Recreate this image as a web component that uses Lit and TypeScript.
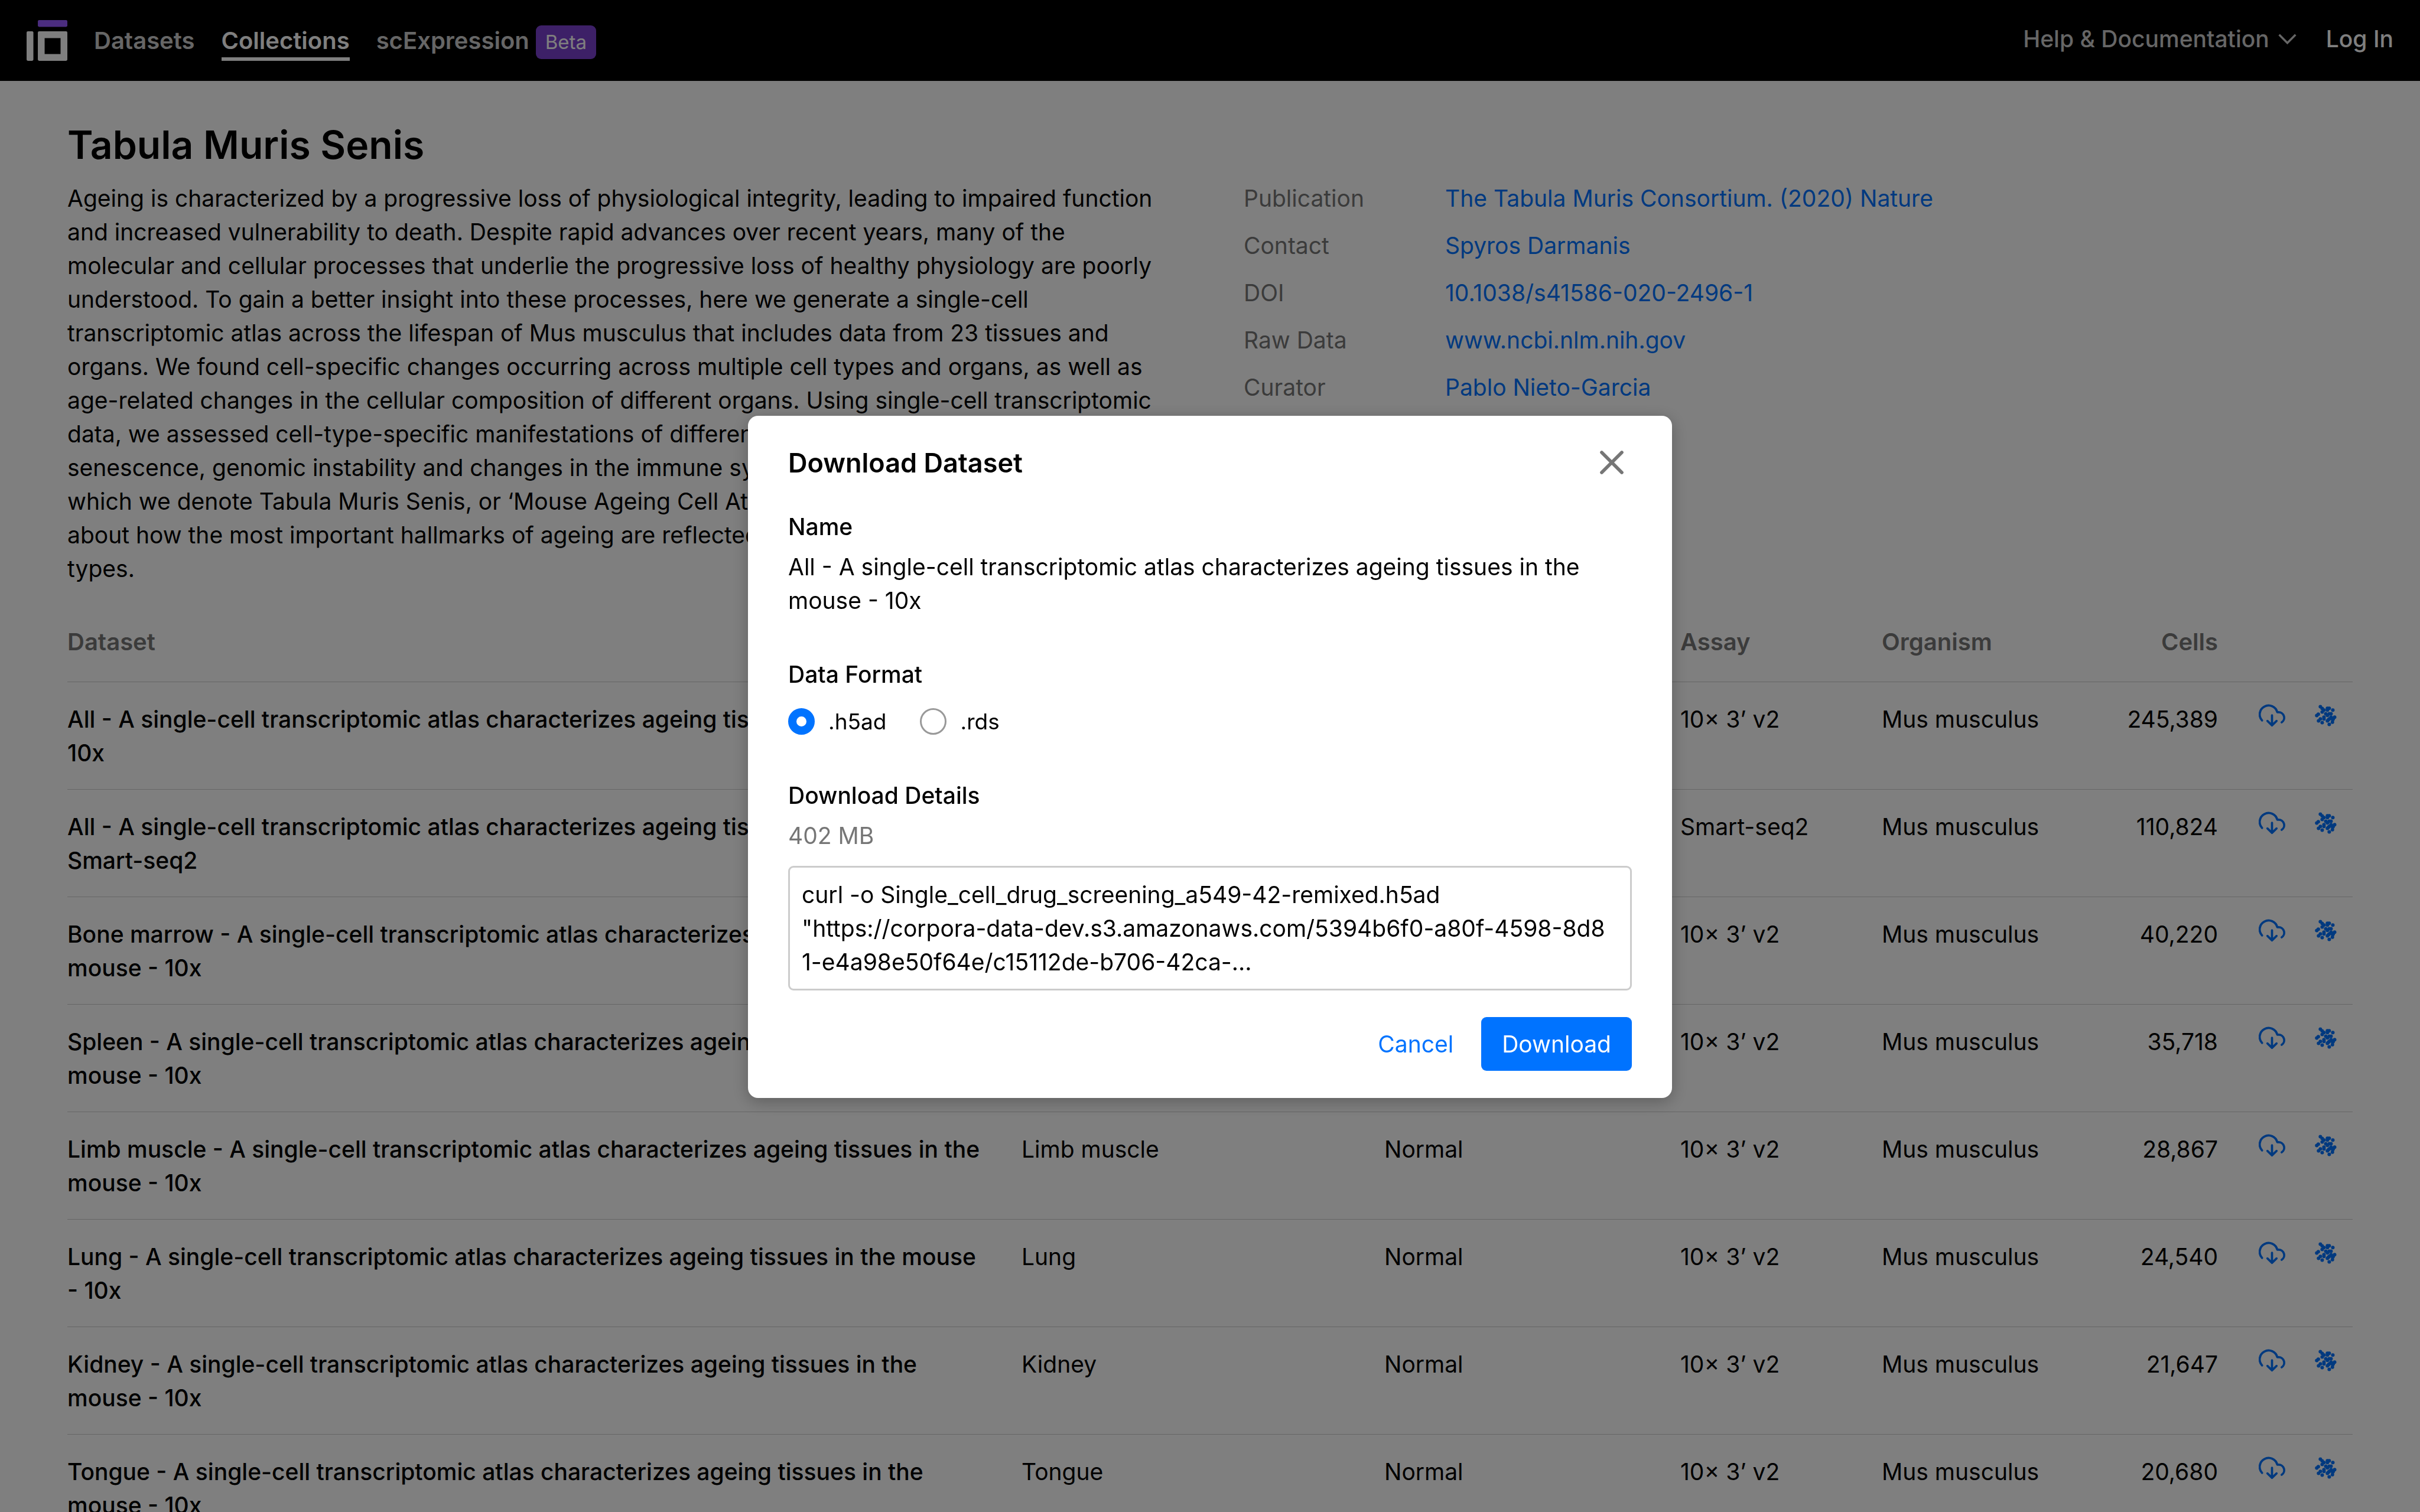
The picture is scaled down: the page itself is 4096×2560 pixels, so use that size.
import { LitElement, html, css, svg } from "lit";
import { customElement, property, state } from "lit/decorators.js";

interface Dataset {
  name: string;
  tissue: string;
  disease: string;
  assay: string;
  organism: string;
  cells: string;
}

const SUFFIX = "A single-cell transcriptomic atlas characterizes ageing tissues in the mouse";

const row = (label: string, cells: string, tech = "10x"): Dataset => ({
  name: `${label} - ${SUFFIX} - ${tech}`,
  tissue: label,
  disease: "Normal",
  assay: tech === "10x" ? "10× 3’ v2" : tech,
  organism: "Mus musculus",
  cells,
});

const DATASETS: Dataset[] = [
  row("All", "245,389"),
  row("All", "110,824", "Smart-seq2"),
  row("Bone marrow", "40,220"),
  row("Spleen", "35,718"),
  row("Limb muscle", "28,867"),
  row("Lung", "24,540"),
  row("Kidney", "21,647"),
  row("Tongue", "20,680"),
];

const DETAILS = [
  ["Publication", "The Tabula Muris Consortium. (2020) Nature"],
  ["Contact", "Spyros Darmanis"],
  ["DOI", "10.1038/s41586-020-2496-1"],
  ["Raw Data", "www.ncbi.nlm.nih.gov"],
  ["Curator", "Pablo Nieto-Garcia"],
];

const DESCRIPTION =
  "Ageing is characterized by a progressive loss of physiological integrity, leading to impaired function and increased vulnerability to death. Despite rapid advances over recent years, many of the molecular and cellular processes that underlie the progressive loss of healthy physiology are poorly understood. To gain a better insight into these processes, here we generate a single-cell transcriptomic atlas across the lifespan of Mus musculus that includes data from 23 tissues and organs. We found cell-specific changes occurring across multiple cell types and organs, as well as age-related changes in the cellular composition of different organs. Using single-cell transcriptomic data, we assessed cell-type-specific manifestations of different hallmarks of ageing, such as senescence, genomic instability and changes in the immune system. This transcriptomic cell atlas—which we denote Tabula Muris Senis, or ‘Mouse Ageing Cell Atlas’—provides molecular information about how the most important hallmarks of ageing are reflected in a broad set of tissues and cell types.";

const COMMAND =
  'curl -o Single_cell_drug_screening_a549-42-remixed.h5ad\n"https://corpora-data-dev.s3.amazonaws.com/5394b6f0-a80f-4598-8d81-e4a98e50f64e/c15112de-b706-42ca-...';

const CELL_DOTS = [
  [549, 128], [562, 141], [575, 153], [562, 166], [600, 140], [613, 140],
  [600, 153], [639, 153], [588, 179], [600, 191], [613, 179], [626, 179],
  [534, 182], [523, 192], [575, 204], [575, 217], [549, 217], [536, 230],
  [562, 243], [600, 230], [607, 223], [613, 217], [626, 204], [652, 204],
  [642, 216], [632, 212], [638, 222], [636, 240], [613, 256],
];

const logo = html`<svg class="logo" viewBox="64 48 96 96" aria-hidden="true">
  <rect x="90.5" y="48" width="69.5" height="16" rx="3" fill="#965bff" />
  <rect x="64" y="74.5" width="16" height="69.5" rx="3" fill="#fff" />
  <path
    fill="#fff"
    fill-rule="evenodd"
    d="M93.5 74.5H157a3 3 0 0 1 3 3V141a3 3 0 0 1-3 3H93.5a3 3 0 0 1-3-3V77.500a3 3 0 0 1 3-3ZM106.500 90.500V128H144V90.500Z"
  />
</svg>`;

const chevron = html`<svg class="icon" viewBox="0 0 64 64" aria-hidden="true">
  <path d="M12.300 22.500 32 42.300 51.700 22.500" fill="none" stroke="currentColor" stroke-width="5" />
</svg>`;

const cloud = html`<svg class="icon" viewBox="0 0 64 64" aria-hidden="true">
  <g fill="none" stroke="currentColor" stroke-width="5.3" stroke-linecap="round" stroke-linejoin="round">
    <path d="M8 43.800A21.500 21.500 0 1 1 44.700 24H48A13.300 13.300 0 0 1 55.300 48.400" />
    <path d="M32 31.300V55.700M21 45 32 55.700 43 45" />
  </g>
</svg>`;

const cellCloud = html`<svg class="icon" viewBox="492 96 192 192" aria-hidden="true">
  ${CELL_DOTS.map(([x, y]) => svg`<circle cx=${x} cy=${y} r="12.8" fill="currentColor" />`)}
</svg>`;

const cross = html`<svg class="cross" viewBox="0 0 96 96" aria-hidden="true">
  <path d="M24 24 72 72M72 24 24 72" fill="none" stroke="currentColor" stroke-width="8" stroke-linecap="round" />
</svg>`;

const shared = css`
  *,
  *::before,
  *::after {
    box-sizing: border-box;
  }
  :host {
    display: block;
    font-family: Inter, "Liberation Sans", sans-serif;
    font-size: 39px;
    line-height: 57px;
    color: #000;
  }
  h1,
  h2,
  h3,
  p,
  dl,
  dd {
    margin: 0;
  }
  a {
    color: #0073ff;
    text-decoration: none;
  }
  button {
    font: inherit;
    margin: 0;
    padding: 0;
    border: 0;
    background: none;
    cursor: pointer;
  }
  .icon {
    display: block;
    width: 45px;
    height: 45px;
  }
`;

@customElement("site-header")
class SiteHeader extends LitElement {
  static styles = [
    shared,
    css`
      .bar {
        display: flex;
        align-items: center;
        justify-content: space-between;
        height: 137px;
        padding: 0 45px;
        background: #000;
        font-weight: 500;
      }
      .group {
        display: flex;
        align-items: center;
        gap: 45px;
      }
      .logo {
        display: block;
        width: 69px;
        height: 69px;
      }
      .link {
        color: #ccc;
        border: solid transparent;
        border-width: 6px 0;
        font-size: 40px;
        font-weight: 600;
      }
      .current {
        color: #fff;
        border-bottom-color: #fff;
      }
      .feature {
        display: flex;
        align-items: center;
        gap: 11px;
      }
      .badge {
        margin-top: 6px;
        padding: 0 16px;
        border-radius: 9px;
        background: #7a41ce;
        color: #fff;
        font-size: 33px;
        font-weight: 400;
      }
      .account {
        gap: 43px;
        padding-bottom: 6px;
      }
      .help {
        display: flex;
        align-items: center;
        gap: 8px;
        color: #ccc;
      }
      .login {
        color: #fff;
      }
    `,
  ];

  render() {
    return html`<header class="bar">
      <nav class="group">
        <a href="#home" aria-label="Home">${logo}</a>
        <a class="link" href="#datasets">Datasets</a>
        <a class="link current" href="#collections" aria-current="page">Collections</a>
        <span class="feature">
          <a class="link" href="#expression">scExpression</a>
          <span class="badge">Beta</span>
        </span>
      </nav>
      <div class="group account">
        <button class="help" type="button">Help &amp; Documentation ${chevron}</button>
        <a class="login" href="#login">Log In</a>
      </div>
    </header>`;
  }
}

@customElement("collection-view")
class CollectionView extends LitElement {
  static styles = [
    shared,
    css`
      .content {
        padding: 68px 114px 0;
      }
      .title {
        margin-bottom: 22px;
        font-size: 66px;
        line-height: 80px;
        font-weight: 600;
      }
      .summary {
        display: grid;
        grid-template-columns: 1fr 1fr;
        gap: 114px;
      }
      .details {
        display: grid;
        grid-template-columns: 341px 1fr;
        align-content: start;
        row-gap: 23px;
      }
      .term {
        color: #767676;
      }
      .table {
        width: 100%;
        margin-top: 67px;
        table-layout: fixed;
        border-spacing: 0;
      }
      .table th,
      .table td {
        padding: 0;
        text-align: left;
        vertical-align: top;
        border-bottom: 1px solid #ccc;
        font-weight: 400;
      }
      .table th {
        padding-bottom: 39px;
        color: #767676;
        font-size: 40px;
        font-weight: 600;
      }
      .table td {
        padding: 34px 0 33px;
      }
      .table .name {
        padding-right: 52px;
        font-weight: 500;
      }
      .table .number {
        text-align: right;
      }
      .tissue {
        width: 614px;
      }
      .disease {
        width: 501px;
      }
      .medium {
        width: 341px;
      }
      .small {
        width: 228px;
      }
      .actions {
        display: flex;
        justify-content: flex-end;
        gap: 46px;
        padding-right: 23px;
      }
      .action {
        color: #0073ff;
      }
    `,
  ];

  @property({ attribute: false }) datasets: Dataset[] = [];

  render() {
    return html`<main class="content">
      <h1 class="title">Tabula Muris Senis</h1>
      <section class="summary">
        <p>${DESCRIPTION}</p>
        <dl class="details">
          ${DETAILS.map(
            ([term, value]) => html`<dt class="term">${term}</dt>
              <dd><a href="#${term}">${value}</a></dd>`
          )}
        </dl>
      </section>
      <table class="table">
        <colgroup>
          <col />
          <col class="tissue" />
          <col class="disease" />
          <col class="medium" />
          <col class="medium" />
          <col class="small" />
          <col class="small" />
        </colgroup>
        <thead>
          <tr>
            <th>Dataset</th>
            <th>Tissue</th>
            <th>Disease</th>
            <th>Assay</th>
            <th>Organism</th>
            <th class="number">Cells</th>
            <th></th>
          </tr>
        </thead>
        <tbody>
          ${this.datasets.map(
            (d) => html`<tr>
              <td class="name">${d.name}</td>
              <td>${d.tissue}</td>
              <td>${d.disease}</td>
              <td>${d.assay}</td>
              <td>${d.organism}</td>
              <td class="number">${d.cells}</td>
              <td>
                <div class="actions">
                  <button class="action" type="button" aria-label="Download">${cloud}</button>
                  <button class="action" type="button" aria-label="Explore">${cellCloud}</button>
                </div>
              </td>
            </tr>`
          )}
        </tbody>
      </table>
    </main>`;
  }
}

@customElement("download-dialog")
class DownloadDialog extends LitElement {
  static styles = [
    shared,
    css`
      .dialog {
        width: 1564px;
        padding: 45px 68px 46px;
        border-radius: 17px;
        background: #fff;
        box-shadow: 0 6px 28px rgba(0, 0, 0, 0.27);
      }
      .head {
        display: flex;
        align-items: center;
        justify-content: space-between;
        margin-bottom: 46px;
      }
      .heading {
        font-size: 45px;
        font-weight: 600;
      }
      .close {
        color: #767676;
      }
      .cross {
        display: block;
        width: 68px;
        height: 68px;
      }
      .section {
        margin: 0 0 68px;
        padding: 0;
        border: 0;
      }
      .label {
        display: block;
        margin-bottom: 11px;
        padding: 0;
        font-size: inherit;
        font-weight: 500;
      }
      .format {
        margin-bottom: 23px;
      }
      .choices {
        display: flex;
        gap: 57px;
      }
      .choice {
        display: flex;
        align-items: center;
        gap: 23px;
        font-size: 37px;
      }
      .radio {
        appearance: none;
        width: 45px;
        height: 45px;
        margin: 0;
        border: 3px solid #999;
        border-radius: 50%;
        background: #fff;
      }
      .radio:checked {
        border: 14px solid #0073ff;
      }
      .size {
        margin-bottom: 23px;
        color: #767676;
      }
      .command {
        display: block;
        width: 100%;
        height: 211px;
        margin-bottom: 45px;
        padding: 17px 28px 17px 20px;
        border: 3px solid #ccc;
        border-radius: 9px;
        background: #fff;
        color: #000;
        font: inherit;
        word-break: break-all;
        overflow: hidden;
        resize: none;
        outline: none;
      }
      .buttons {
        display: flex;
        justify-content: flex-end;
        gap: 12px;
      }
      .button {
        padding: 17px 35px;
        border-radius: 9px;
        color: #0073ff;
      }
      .primary {
        background: #0073ff;
        color: #fff;
      }
    `,
  ];

  @property() name = "";
  @state() private format = "h5ad";

  private choice(value: string) {
    return html`<label class="choice">
      <input
        class="radio"
        type="radio"
        name="format"
        value=${value}
        .checked=${this.format === value}
        @change=${() => (this.format = value)}
      />
      .${value}
    </label>`;
  }

  render() {
    return html`<div class="dialog" role="dialog" aria-modal="true" aria-labelledby="heading">
      <div class="head">
        <h2 class="heading" id="heading">Download Dataset</h2>
        <button class="close" type="button" aria-label="Close">${cross}</button>
      </div>
      <section class="section">
        <h3 class="label">Name</h3>
        <p>${this.name}</p>
      </section>
      <fieldset class="section">
        <legend class="label format">Data Format</legend>
        <div class="choices">${this.choice("h5ad")}${this.choice("rds")}</div>
      </fieldset>
      <label class="label" for="command">Download Details</label>
      <p class="size">402 MB</p>
      <textarea class="command" id="command" rows="3" readonly spellcheck="false" .value=${COMMAND}></textarea>
      <div class="buttons">
        <button class="button" type="button">Cancel</button>
        <button class="button primary" type="button">Download</button>
      </div>
    </div>`;
  }
}

@customElement("app-root")
class AppRoot extends LitElement {
  static styles = css`
    :host {
      display: block;
      height: 100vh;
      overflow: hidden;
      background: #fff;
    }
    .overlay {
      position: fixed;
      inset: 0;
      display: flex;
      align-items: center;
      justify-content: center;
      padding-top: 3px;
      background: rgba(0, 0, 0, 0.5);
    }
  `;

  render() {
    return html`<site-header></site-header>
      <collection-view .datasets=${DATASETS}></collection-view>
      <div class="overlay">
        <download-dialog .name=${DATASETS[0].name}></download-dialog>
      </div>`;
  }
}
